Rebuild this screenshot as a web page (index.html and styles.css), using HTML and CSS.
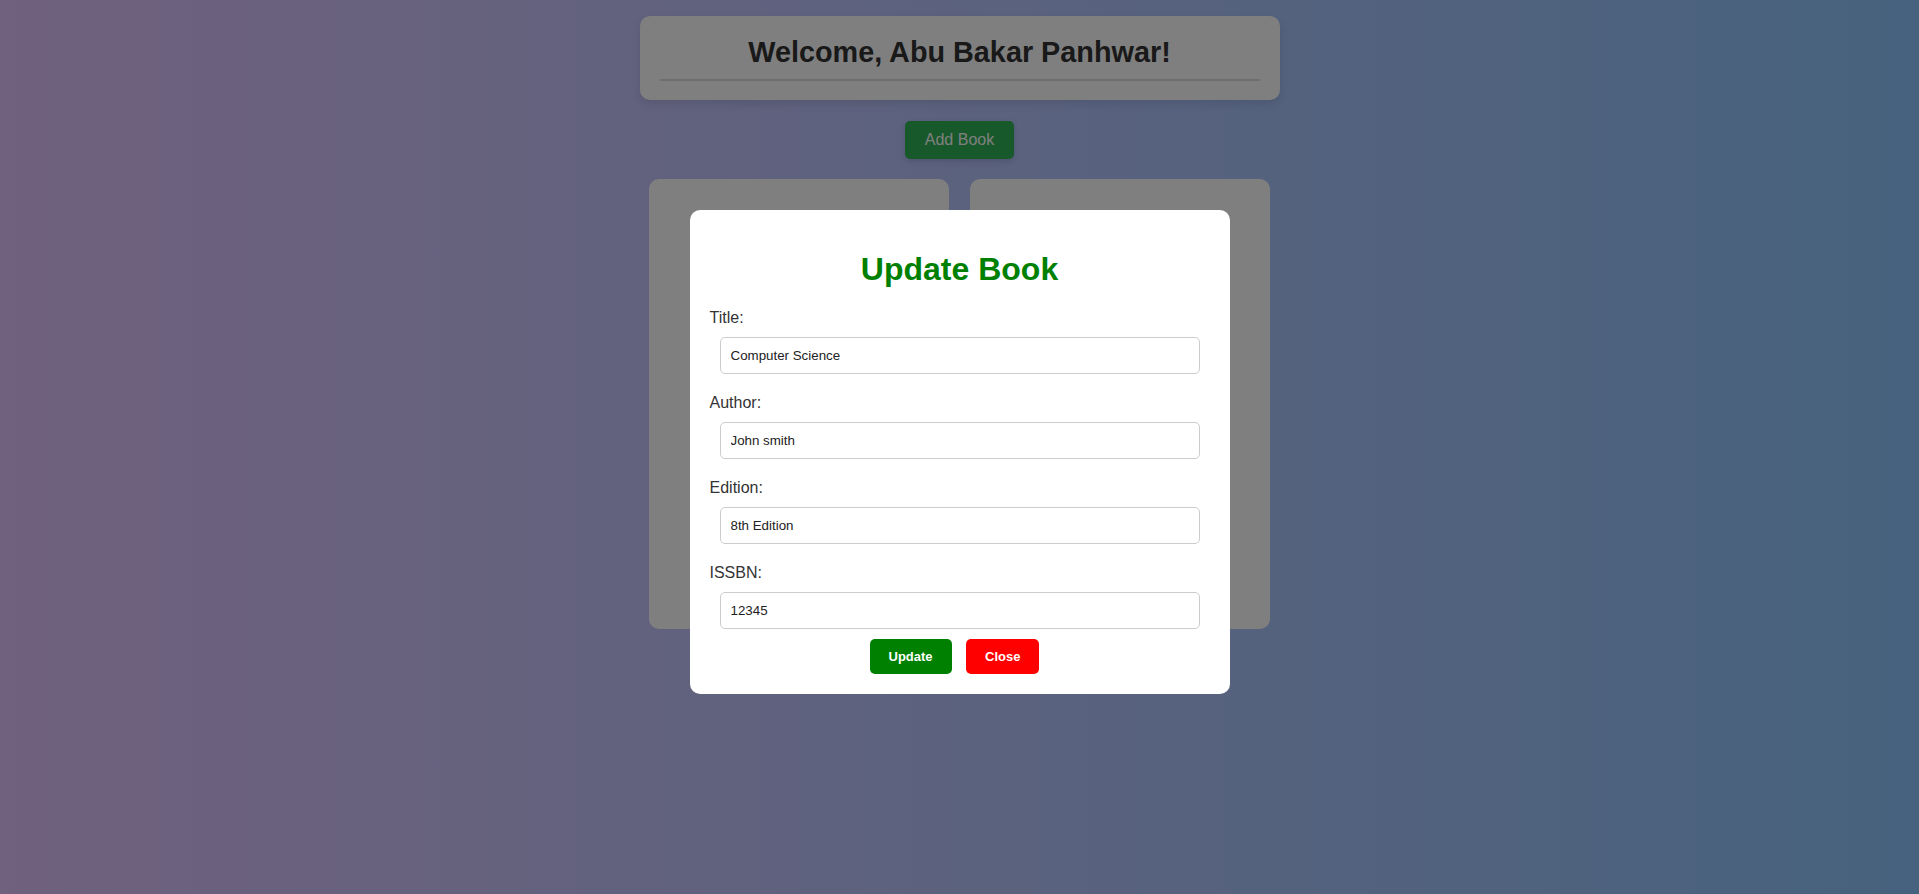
FILE: index.html
```html
<!DOCTYPE html>
<html lang="en">
<head>
<meta charset="UTF-8">
<title>Library</title>
<link rel="stylesheet" href="styles.css">
</head>
<body>
<div class="page">
  <header class="welcome-card">
    <h1 class="welcome-title">Welcome, Abu Bakar Panhwar!</h1>
    <hr class="welcome-rule">
  </header>
  <div class="actions">
    <button class="add-btn">Add Book</button>
  </div>
  <div class="book-list">
    <div class="book-card"></div>
    <div class="book-card"></div>
  </div>
</div>

<div class="overlay">
  <div class="modal">
    <h1 class="modal-title">Update Book</h1>
    <form class="modal-form">
      <div class="field">
        <label class="field-label">Title:</label>
        <input class="field-input" type="text" value="Computer Science">
      </div>
      <div class="field">
        <label class="field-label">Author:</label>
        <input class="field-input" type="text" value="John smith">
      </div>
      <div class="field">
        <label class="field-label">Edition:</label>
        <input class="field-input" type="text" value="8th Edition">
      </div>
      <div class="field">
        <label class="field-label">ISSBN:</label>
        <input class="field-input" type="text" value="12345">
      </div>
      <div class="modal-actions">
        <button type="button" class="btn btn-update">Update</button>
        <button type="button" class="btn btn-close">Close</button>
      </div>
    </form>
  </div>
</div>
</body>
</html>
```

FILE: styles.css
```css
html, body {
  margin: 0;
  padding: 0;
}

body {
  min-height: 100vh;
  font-family: "Liberation Sans", Arial, sans-serif;
  background: linear-gradient(to right, #e0c3fc, #8ec5fc);
}

.page {
  display: flex;
  flex-direction: column;
  align-items: center;
  padding-top: 16px;
}

.welcome-card {
  box-sizing: border-box;
  width: 640px;
  padding: 20px 20px 19px;
  background: #fff;
  border-radius: 10px;
  box-shadow: 0 4px 8px rgba(0, 0, 0, 0.1);
}

.welcome-title {
  margin: 0 0 10px;
  font-size: 28.8px;
  text-align: center;
  color: #333;
}

.welcome-rule {
  margin: 0;
  border: 0;
  border-top: 2px solid #ddd;
}

.actions {
  margin: 21px 0 20px;
}

.add-btn {
  padding: 10px 20px;
  font-family: "Liberation Sans", Arial, sans-serif;
  font-size: 16px;
  line-height: 18px;
  color: #fff;
  background: #2eb254;
  border: none;
  border-radius: 5px;
  box-shadow: 0 2px 6px rgba(0, 0, 0, 0.15);
}

.book-list {
  display: flex;
  gap: 21px;
}

.book-card {
  width: 300px;
  height: 450px;
  background: #fff;
  border-radius: 10px;
}

.overlay {
  position: fixed;
  inset: 0;
  box-sizing: border-box;
  padding-top: 10px;
  display: flex;
  align-items: center;
  justify-content: center;
  background: rgba(0, 0, 0, 0.5);
}

.modal {
  width: 500px;
  padding: 20px;
  background: #fff;
  border-radius: 10px;
}

.modal-title {
  margin: 21.44px 0;
  font-size: 32px;
  text-align: center;
  color: #008000;
}

.modal-form {
  margin: 0;
}

.field {
  display: flex;
  flex-direction: column;
}

.field + .field {
  margin-top: 10px;
}

.field-label {
  margin-bottom: 10px;
  font-size: 16px;
  color: #333;
}

.field-input {
  box-sizing: border-box;
  margin: 0 10px 10px;
  padding: 10px;
  font-family: "Liberation Sans", Arial, sans-serif;
  font-size: 13.333px;
  color: #222;
  border: 1px solid #ccc;
  border-radius: 5px;
}

.modal-actions {
  text-align: center;
  font-size: 16px;
}

.btn {
  margin-right: 10px;
  padding: 10px 19px;
  font-family: "Liberation Sans", Arial, sans-serif;
  font-size: 13px;
  font-weight: bold;
  color: #fff;
  border: none;
  border-radius: 5px;
}

.btn-update {
  background: #008000;
}

.btn-close {
  background: #ff0000;
}
```
